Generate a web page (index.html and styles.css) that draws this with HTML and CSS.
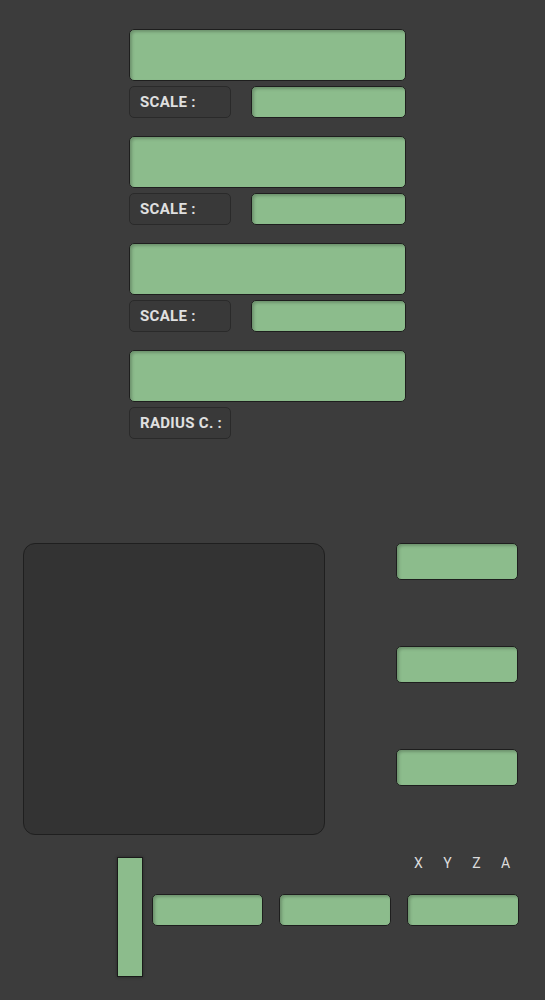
FILE: index.html
```
<!DOCTYPE html>
<html lang="en">
<head>
    <meta charset="UTF-8">
    <meta name="viewport" content="width=device-width, initial-scale=1.0">
    <title>Controls</title>
    <link rel="stylesheet" href="styles.css">
</head>
<body>

<div class="params">
    <div class="group">
        <div class="field field-wide"></div>
        <div class="row">
            <div class="tag">SCALE :</div>
            <div class="field field-small"></div>
        </div>
    </div>
    <div class="group">
        <div class="field field-wide"></div>
        <div class="row">
            <div class="tag">SCALE :</div>
            <div class="field field-small"></div>
        </div>
    </div>
    <div class="group">
        <div class="field field-wide"></div>
        <div class="row">
            <div class="tag">SCALE :</div>
            <div class="field field-small"></div>
        </div>
    </div>
    <div class="group">
        <div class="field field-wide"></div>
        <div class="row">
            <div class="tag">RADIUS C. :</div>
        </div>
    </div>
</div>

<div class="middle">
    <div class="pad"></div>
    <div class="side">
        <div class="field field-side"></div>
        <div class="field field-side"></div>
        <div class="field field-side"></div>
    </div>
</div>

<div class="bottom">
    <div class="slider"></div>
    <div class="axes">
        <div class="axis-labels">
            <span>X</span>
            <span>Y</span>
            <span>Z</span>
            <span>A</span>
        </div>
        <div class="axis-fields">
            <div class="field field-axis"></div>
            <div class="field field-axis"></div>
            <div class="field field-axis"></div>
        </div>
    </div>
</div>

</body>
</html>
```

FILE: styles.css
```
body {
    margin: 0;
    padding: 0;
    background-color: #3c3c3c;
    font-family: Roboto, 'Liberation Sans', sans-serif;
    color: #e0e0e0;
    width: 545px;
    height: 1000px;
    overflow: hidden;
}

/* green value fields */
.field {
    box-sizing: border-box;
    background-color: #8cbc8c;
    border: 1px solid #1e1e1e;
    border-radius: 5px;
    box-shadow: inset 2px 2px 3px rgba(0, 0, 0, 0.22);
}

.field-wide {
    width: 277px;
    height: 52px;
}

.field-small {
    width: 155px;
    height: 32px;
}

.field-side {
    width: 122px;
    height: 37px;
}

.field-axis {
    width: 112px;
    height: 32px;
}

.field-axis:first-child {
    width: 111px;
}

/* top parameter list */
.params {
    padding: 29px 0 0 129px;
    width: 277px;
    display: flex;
    flex-direction: column;
    gap: 18px;
}

.group {
    display: flex;
    flex-direction: column;
    gap: 5px;
}

.row {
    display: flex;
    justify-content: space-between;
    align-items: center;
}

.tag {
    box-sizing: border-box;
    width: 102px;
    height: 32px;
    padding-left: 10px;
    line-height: 30px;
    font-size: 15px;
    font-weight: bold;
    letter-spacing: 0.3px;
    white-space: nowrap;
    background-color: #393939;
    border: 1px solid #2a2a2a;
    border-radius: 5px;
}

/* pad + side fields */
.middle {
    display: flex;
    margin-top: 104px;
    padding-left: 23px;
}

.pad {
    box-sizing: border-box;
    width: 302px;
    height: 292px;
    background-color: #333333;
    border: 1px solid #1f1f1f;
    border-radius: 12px;
}

.side {
    margin-left: 71px;
    display: flex;
    flex-direction: column;
    gap: 66px;
}

/* bottom axis row */
.bottom {
    display: flex;
    margin-top: 22px;
    padding-left: 117px;
}

.slider {
    box-sizing: border-box;
    width: 26px;
    height: 120px;
    background-color: #8cbc8c;
    border: 1px solid #1a1a1a;
    box-shadow: 0 0 3px rgba(0, 0, 0, 0.35);
}

.axes {
    margin-left: 9px;
    display: flex;
    flex-direction: column;
}

.axis-labels {
    box-sizing: border-box;
    height: 37px;
    padding-top: 1px;
    display: flex;
    justify-content: flex-end;
    margin-right: -1px;
    font-size: 14px;
    line-height: 10px;
    color: #dcdcdc;
}

.axis-labels span {
    width: 29px;
    text-align: center;
}

.axis-fields {
    display: flex;
    gap: 16px;
}
```
